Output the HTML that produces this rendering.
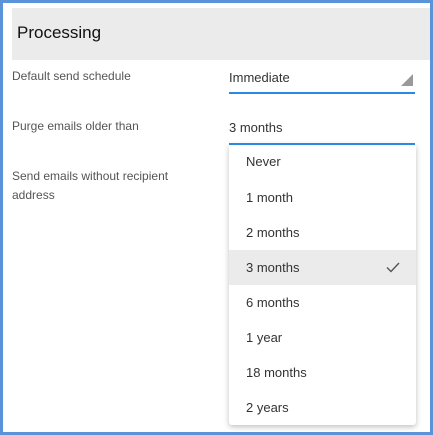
<!DOCTYPE html>
<html><head><style>
body{margin:0;width:433px;height:435px;overflow:hidden;font-family:"Liberation Sans",Arial,sans-serif;}
.frame{position:absolute;left:0;top:0;width:427px;height:429px;border:3px solid #5b93d8;background:#fff;}
.hdr{position:absolute;left:9px;top:5px;width:418px;height:52px;background:#ebebeb;}
.hdr span{position:absolute;left:5px;top:15px;font-size:17px;color:#111;}
.lbl{position:absolute;left:9px;font-size:12px;color:#555;line-height:19px;}
.val{position:absolute;left:226px;font-size:13px;color:#333;}
.ul{position:absolute;left:226px;width:186px;height:2px;background:#2b8ae0;z-index:2;}
.menu{position:absolute;left:226px;top:141px;width:187px;height:281px;background:#fff;border-radius:3px;box-shadow:0 2px 6px rgba(0,0,0,.25);}
.it{height:35px;line-height:35px;padding-left:17px;font-size:13px;color:#333;position:relative;}
.sel{background:#ebebeb;}
</style></head><body>
<div class="frame">
<div class="hdr"><span>Processing</span></div>
<div class="lbl" style="top:64px">Default send schedule</div>
<div class="val" style="top:67px">Immediate</div>
<div style="position:absolute;left:398px;top:71px;width:0;height:0;border-left:12px solid transparent;border-bottom:12px solid #999;"></div>
<div class="ul" style="top:89px"></div>
<div class="lbl" style="top:114px">Purge emails older than</div>
<div class="val" style="top:117px">3 months</div>
<div class="menu">
<div class="it" style="height:36px;line-height:36px">Never</div>
<div class="it">1 month</div>
<div class="it">2 months</div>
<div class="it sel">3 months<svg style="position:absolute;right:16px;top:12px" width="14" height="11" viewBox="0 0 14 11"><path d="M1 5.5 L5 9.5 L13 1" fill="none" stroke="#555" stroke-width="1.4"/></svg></div>
<div class="it">6 months</div>
<div class="it">1 year</div>
<div class="it">18 months</div>
<div class="it">2 years</div>
</div>
<div class="ul" style="top:140px"></div>
<div class="lbl" style="top:164px">Send emails without recipient<br>address</div>
</div>
</body></html>
